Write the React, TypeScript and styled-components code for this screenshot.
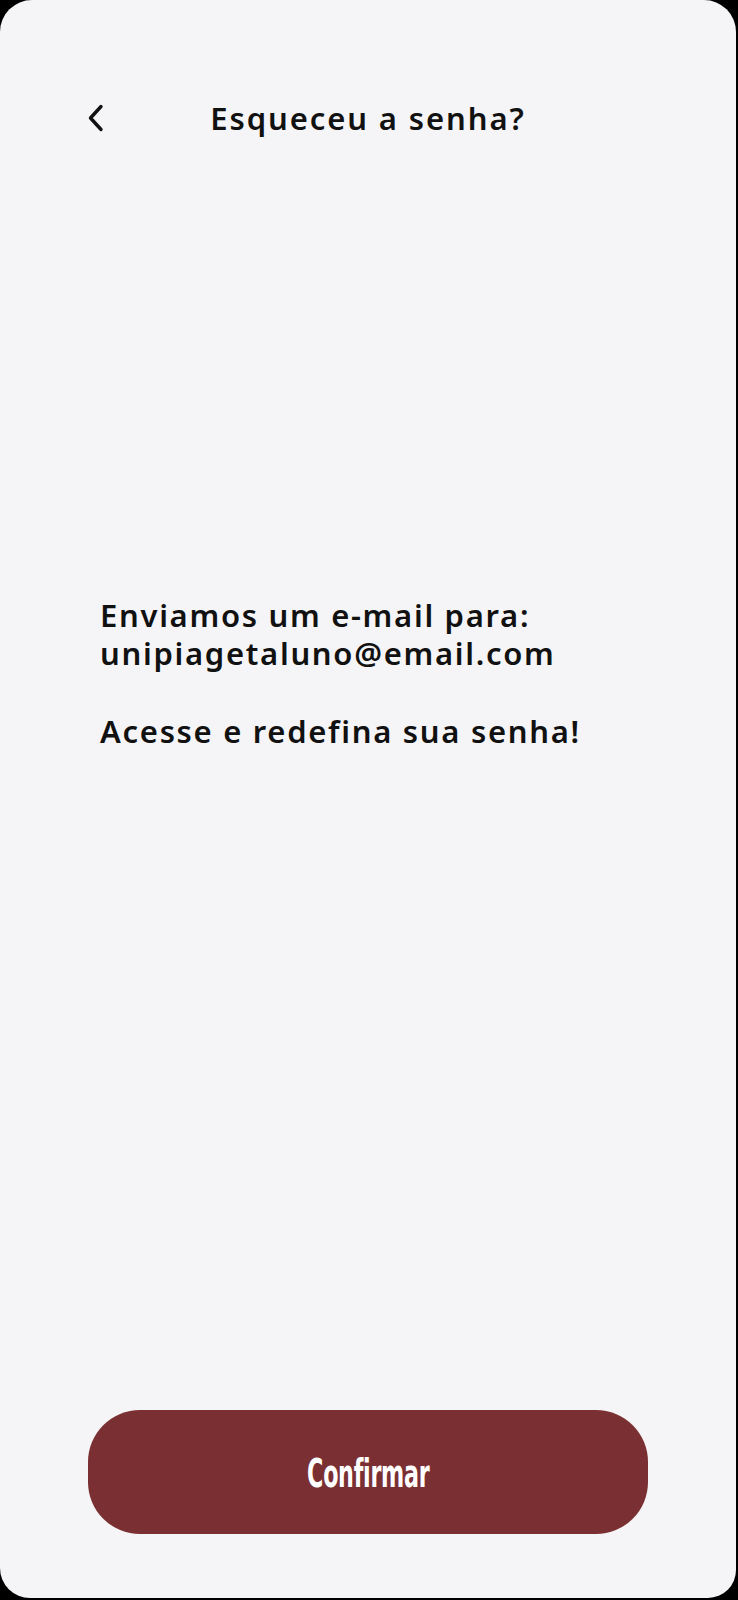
import styled, { createGlobalStyle } from "styled-components";

const GlobalStyle = createGlobalStyle`
  html, body {
    margin: 0;
    padding: 0;
    background: #000;
  }
  body {
    font-family: "Noto Sans", "DejaVu Sans", sans-serif;
  }
`;

const Screen = styled.div`
  width: 736px;
  height: 1598px;
  background: #f5f5f7;
  border-radius: 32px 32px 28px 30px;
  display: flex;
  flex-direction: column;
  box-sizing: border-box;
  padding: 0 88px 64px 88px;
`;

const Header = styled.header`
  display: grid;
  grid-template-columns: 40px 1fr 40px;
  align-items: center;
  height: 44px;
  margin-top: 96px;
`;

const BackButton = styled.button`
  border: none;
  background: none;
  padding: 0;
  display: flex;
  align-items: center;
  cursor: pointer;
  color: #111;
`;

const Title = styled.h1`
  margin: 0;
  text-align: center;
  font-size: 31px;
  font-weight: 600;
  color: #111;
  letter-spacing: 1.9px;
`;

const Message = styled.div`
  flex: 1;
  display: flex;
  flex-direction: column;
  justify-content: center;
  padding: 0 0 204px 12px;
`;

const Line = styled.p<{ $gap?: boolean }>`
  margin: ${(p) => (p.$gap ? "40px" : "0")} 0 0;
  font-size: 31px;
  line-height: 38px;
  font-weight: 600;
  letter-spacing: 1.7px;
  color: #111;
`;

const ConfirmButton = styled.button`
  height: 124px;
  width: 100%;
  border: none;
  border-radius: 52px;
  background: #7a3033;
  color: #fff;
  cursor: pointer;
  display: flex;
  align-items: center;
  justify-content: center;
`;

const ButtonLabel = styled.span`
  display: inline-block;
  font-family: "DejaVu Sans", sans-serif;
  font-size: 39px;
  font-weight: 700;
  transform: scaleX(0.57);
  letter-spacing: -0.5px;
  margin-top: 2px;
`;

export default function App() {
  return (
    <>
      <GlobalStyle />
      <Screen>
        <Header>
          <BackButton aria-label="Voltar">
            <svg width="16" height="28" viewBox="0 0 16 28" fill="none">
              <path
                d="M13 2.5 L2.5 14 L13 25.5"
                stroke="currentColor"
                strokeWidth="3.4"
                strokeLinecap="round"
                strokeLinejoin="round"
              />
            </svg>
          </BackButton>
          <Title>Esqueceu a senha?</Title>
          <span />
        </Header>
        <Message>
          <Line>Enviamos um e-mail para:</Line>
          <Line>unipiagetaluno@email.com</Line>
          <Line $gap>Acesse e redefina sua senha!</Line>
        </Message>
        <ConfirmButton>
          <ButtonLabel>Confirmar</ButtonLabel>
        </ConfirmButton>
      </Screen>
    </>
  );
}
